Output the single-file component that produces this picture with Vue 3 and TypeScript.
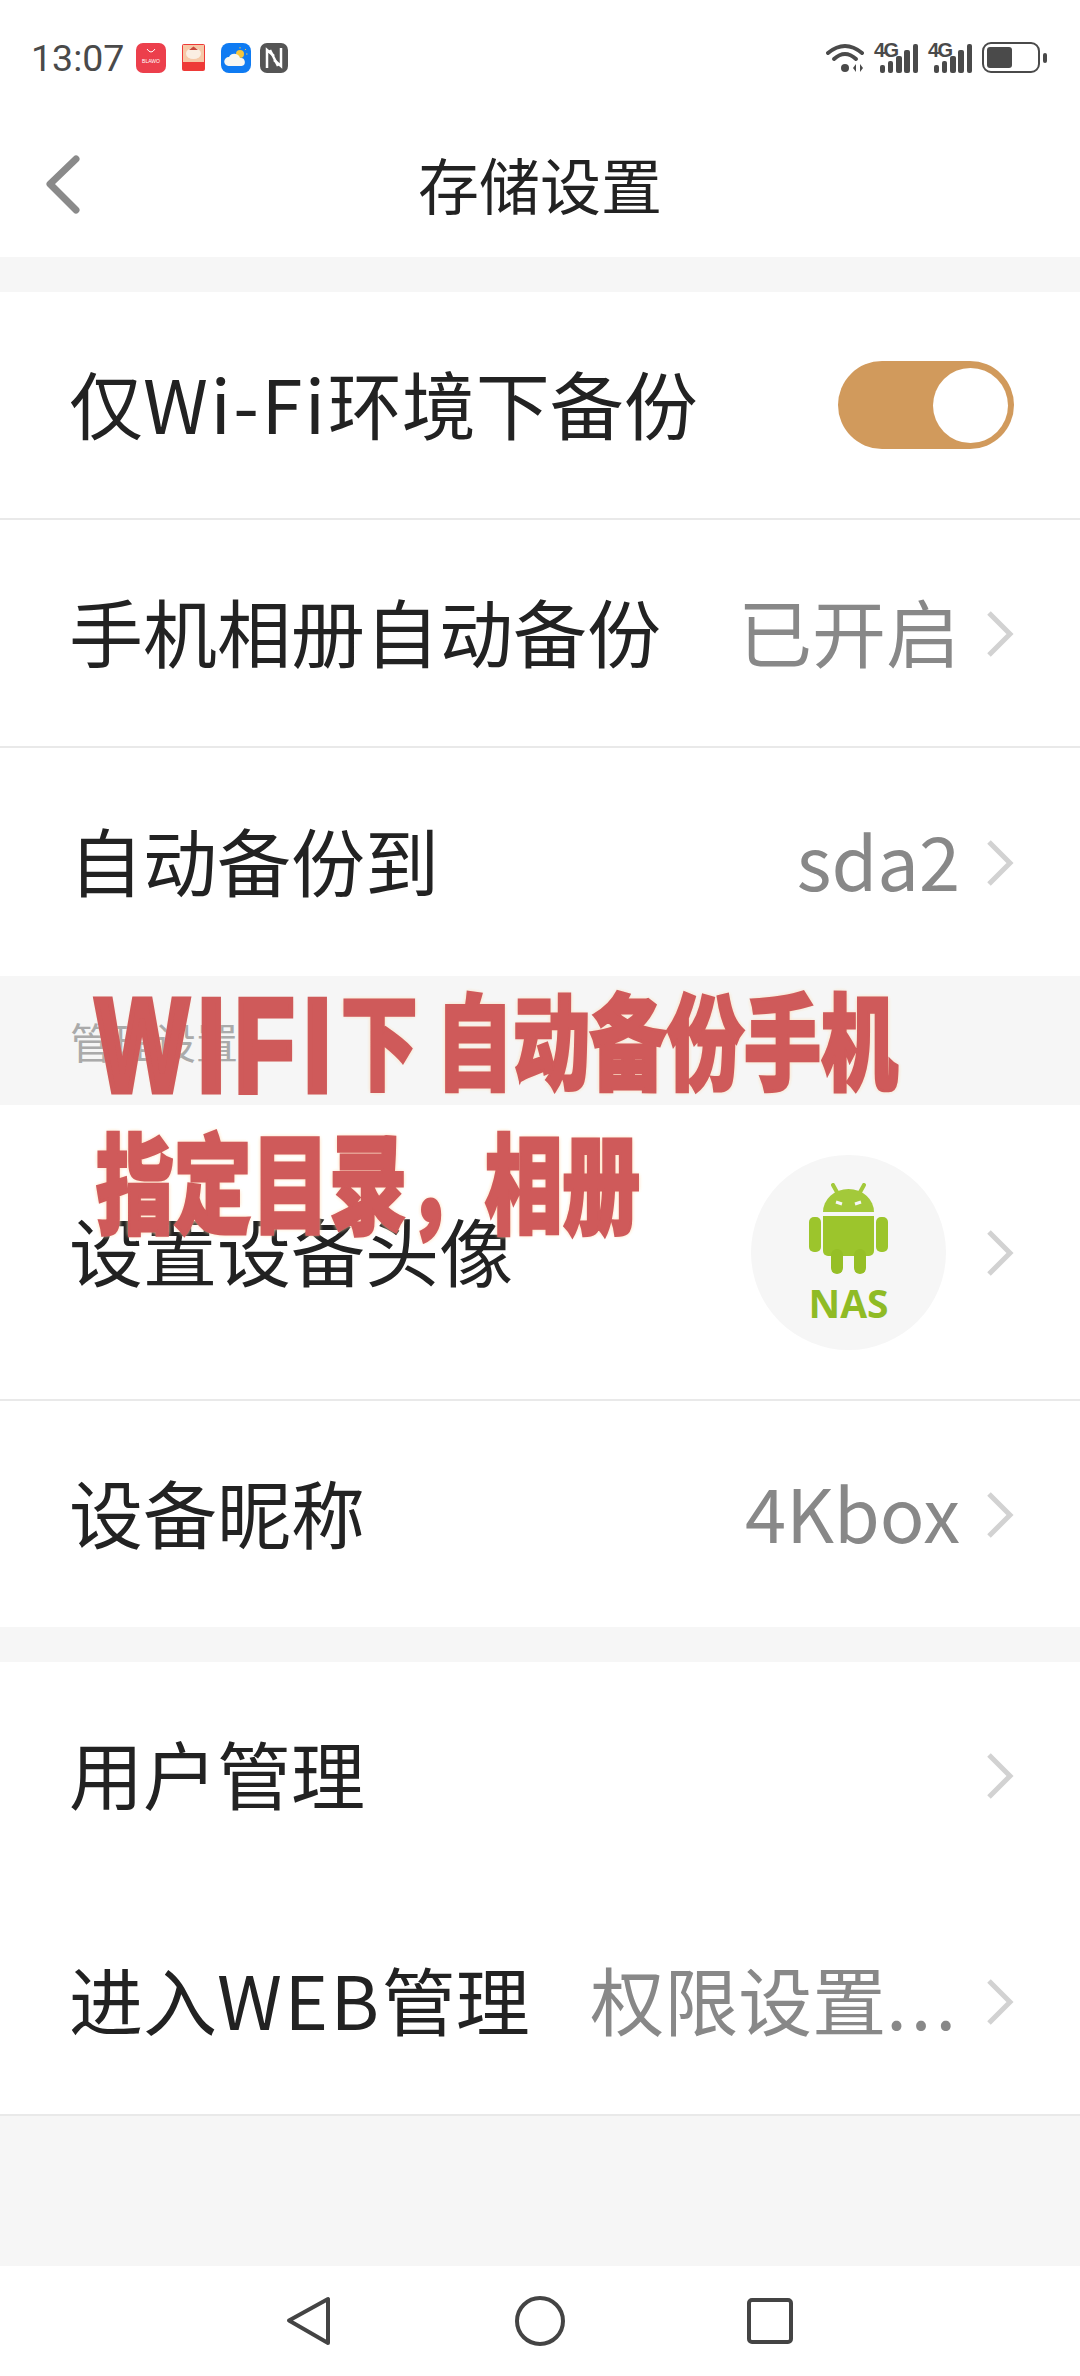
<template>
  <div class="page">
    <div class="status-bar">
      <span class="clock">13:07</span>
      <svg class="ic-shop" viewBox="0 0 30 30">
        <rect width="30" height="30" rx="7" fill="#ec3f4c" />
        <path d="M11 6 Q15 12 19 6" fill="none" stroke="#fff" stroke-width="1" />
        <text x="15" y="19.500" text-anchor="middle" class="tiny">BLAWO</text>
      </svg>
      <svg class="ic-gift" viewBox="0 0 23 27">
        <rect width="23" height="27" rx="2" fill="#ee3a37" />
        <rect x="1" y="1" width="21" height="17" fill="#f6c9a8" />
        <ellipse cx="11.500" cy="9.500" rx="7.500" ry="5.500" fill="#fbeee2" />
        <path d="M7 6 L11.500 2.500 L16 6 Z" fill="#c9483c" />
      </svg>
      <svg class="ic-weather" viewBox="0 0 30 30">
        <rect width="30" height="30" rx="8" fill="#0f7bf2" />
        <circle cx="19" cy="11" r="4" fill="#f5c63c" />
        <path d="M19 4 V5.500 M25 6 L24 7 M26.500 11 H25" stroke="#f5c63c" stroke-width="1" />
        <path d="M7.500 23 a4.500 4.500 0 0 1 0.500 -9 a6 6 0 0 1 11 1 a4 4 0 0 1 1.500 8 Z" fill="#f7f7f2" />
      </svg>
      <svg class="ic-nfc" viewBox="0 0 28 30">
        <rect width="28" height="30" rx="7" fill="#555" />
        <path d="M7 25 V7 L14 13 M21 5 V23 L14 17" fill="none" stroke="#fff" stroke-width="2.500" />
        <path d="M10 7 L18 23" stroke="#fff" stroke-width="2.500" />
      </svg>
      <span class="spacer"></span>
      <svg class="ic-wifi" viewBox="0 0 40 31">
        <path d="M2 11 Q19 -3 36 11" fill="none" stroke="#4a4a4a" stroke-width="4" stroke-linecap="round" />
        <path d="M8 17 Q19 7 30 17" fill="none" stroke="#4a4a4a" stroke-width="4" stroke-linecap="round" />
        <circle cx="19" cy="26" r="4" fill="#4a4a4a" />
        <path d="M30 22 L27 26 L30 30 Z M34 22 L37 26 L34 30 Z" fill="#4a4a4a" />
      </svg>
      <div v-for="n in 2" :key="n" class="signal">
        <span class="four-g">4G</span>
        <span
          v-for="(h, i) in signalBars"
          :key="i"
          class="bar"
          :style="{ height: h + 'px' }"
        ></span>
      </div>
      <div class="battery"><span class="battery-fill"></span></div>
      <span class="battery-nub"></span>
    </div>

    <header class="nav-head">
      <svg class="back" viewBox="0 0 36 60">
        <path d="M31 4 L5 29 L31 55" fill="none" stroke="#8a8a8a" stroke-width="7" stroke-linecap="round" stroke-linejoin="round" />
      </svg>
      <h1 class="title">存储设置</h1>
    </header>

    <div class="gap"></div>
    <section class="group">
      <div class="row line">
        <span class="label">仅<span class="wide">Wi-Fi</span>环境下备份</span>
        <span class="switch"><span class="knob"></span></span>
      </div>
      <div class="row line">
        <span class="label">手机相册自动备份</span>
        <span class="value">已开启</span>
        <svg class="chev" viewBox="0 0 28 48"><path d="M3 3 L24 24 L3 45" /></svg>
      </div>
      <div class="row">
        <span class="label">自动备份到</span>
        <span class="value">sda2</span>
        <svg class="chev" viewBox="0 0 28 48"><path d="M3 3 L24 24 L3 45" /></svg>
      </div>
    </section>

    <div class="section-title">管理设置</div>
    <section class="group">
      <div class="row tall line">
        <span class="label">设置设备头像</span>
        <div class="avatar">
          <svg class="droid" viewBox="0 0 80 92">
            <path d="M14 29 a25.500 23 0 0 1 51 0 Z" fill="#a3c93a" />
            <path d="M24 2 L29 11 M55 2 L50 11" stroke="#a3c93a" stroke-width="4" stroke-linecap="round" />
            <path d="M14 33 H65 V68 a5 5 0 0 1 -5 5 H19 a5 5 0 0 1 -5 -5 Z" fill="#9cc52c" />
            <rect x="0" y="34" width="12" height="35" rx="5" fill="#9cc52c" />
            <rect x="67" y="34" width="12" height="35" rx="5" fill="#9cc52c" />
            <rect x="22" y="66" width="12" height="25" rx="6" fill="#96bf26" />
            <rect x="45" y="66" width="12" height="25" rx="6" fill="#96bf26" />
            <path d="M27 19 L33 21 M52 19 L46 21" stroke="#f6f6f6" stroke-width="3" />
          </svg>
          <span class="nas">NAS</span>
        </div>
        <svg class="chev" viewBox="0 0 28 48"><path d="M3 3 L24 24 L3 45" /></svg>
      </div>
      <div class="row short">
        <span class="label">设备昵称</span>
        <span class="value">4Kbox</span>
        <svg class="chev" viewBox="0 0 28 48"><path d="M3 3 L24 24 L3 45" /></svg>
      </div>
    </section>

    <div class="gap"></div>
    <section class="group line-bottom">
      <div class="row short">
        <span class="label">用户管理</span>
        <svg class="chev" viewBox="0 0 28 48"><path d="M3 3 L24 24 L3 45" /></svg>
      </div>
      <div class="row short">
        <span class="label">进入<span class="wide">WEB</span>管理</span>
        <span class="value">权限设置<span class="dots">...</span></span>
        <svg class="chev" viewBox="0 0 28 48"><path d="M3 3 L24 24 L3 45" /></svg>
      </div>
    </section>

    <div class="filler"></div>
    <footer class="soft-keys">
      <svg class="key" viewBox="0 0 50 50">
        <path d="M43 3 V47 L4 24.500 Z" fill="none" stroke="#444" stroke-width="4" stroke-linejoin="round" />
      </svg>
      <svg class="key" viewBox="0 0 50 50">
        <circle cx="25" cy="25" r="23" fill="none" stroke="#444" stroke-width="4" />
      </svg>
      <svg class="key" viewBox="0 0 50 50">
        <rect x="4" y="4" width="42" height="42" rx="3" fill="none" stroke="#444" stroke-width="4" />
      </svg>
    </footer>

    <div class="overlay overlay-one"><span class="latin">WIFI</span><span class="under">下</span>自动备份手机</div>
    <div class="overlay overlay-two">指定目录，相册</div>
  </div>
</template>

<script setup lang="ts">
const signalBars: number[] = [8, 12, 17, 23, 29]
</script>

<style>
html,
body {
  margin: 0;
  background: #fff;
}
</style>

<style scoped>
.page {
  position: relative;
  display: flex;
  flex-direction: column;
  width: 1080px;
  height: 2376px;
  overflow: hidden;
  background: #f6f6f6;
  font-family: "Noto Sans CJK SC", "Liberation Sans", sans-serif;
}

.status-bar {
  display: flex;
  align-items: center;
  height: 115px;
  padding: 0 33px 0 31px;
  box-sizing: border-box;
  background: #fff;
}

.clock {
  font-family: Roboto, sans-serif;
  font-size: 37.500px;
  color: #4a4a4a;
  margin-right: 12px;
}

.ic-shop {
  width: 30px;
  height: 30px;
  margin-right: 16px;
}

.tiny {
  font-family: "Liberation Sans", sans-serif;
  font-size: 5px;
  fill: #fff;
}

.ic-gift {
  width: 23px;
  height: 27px;
  margin-right: 16px;
}

.ic-weather {
  width: 30px;
  height: 30px;
  margin-right: 9px;
}

.ic-nfc {
  width: 28px;
  height: 30px;
}

.spacer {
  flex: 1;
}

.ic-wifi {
  width: 40px;
  height: 31px;
  margin-right: 8px;
}

.signal {
  position: relative;
  display: flex;
  align-items: flex-end;
  justify-content: flex-end;
  gap: 2.700px;
  width: 44px;
  height: 30px;
  margin-right: 10px;
}

.four-g {
  position: absolute;
  left: 0;
  top: -4px;
  font-family: "Liberation Sans", sans-serif;
  font-weight: 700;
  font-size: 20px;
  letter-spacing: -1.500px;
  color: #4a4a4a;
}

.bar {
  width: 5.500px;
  border-radius: 2px;
  background: #4a4a4a;
}

.battery {
  display: flex;
  align-items: center;
  width: 58px;
  height: 31px;
  padding: 3px;
  box-sizing: border-box;
  border: 2.500px solid #4a4a4a;
  border-radius: 9px;
}

.battery-fill {
  display: block;
  width: 25px;
  height: 100%;
  border-radius: 3px;
  background: #4a4a4a;
}

.battery-nub {
  width: 4px;
  height: 10px;
  margin-left: 3px;
  border-radius: 2px;
  background: #4a4a4a;
}

.nav-head {
  position: relative;
  display: flex;
  align-items: center;
  justify-content: center;
  height: 142px;
  padding-bottom: 6px;
  box-sizing: border-box;
  background: #fff;
}

.back {
  position: absolute;
  left: 45px;
  top: 40px;
  width: 36px;
  height: 60px;
}

.title {
  margin: 0;
  font-size: 61px;
  font-weight: 400;
  color: #222;
  line-height: 1;
}

.gap {
  height: 35px;
}

.group {
  background: #fff;
}

.row {
  display: flex;
  align-items: center;
  height: 228px;
  padding: 0 66px 0 69px;
  box-sizing: border-box;
}

.row.tall {
  height: 296px;
}

.row.short {
  height: 226px;
}

.line {
  border-bottom: 2px solid #e9e9e9;
}

.line-bottom {
  border-bottom: 2px solid #e9e9e9;
}

.label {
  flex: 1;
  padding-bottom: 7px;
  font-size: 74px;
  line-height: 1;
  color: #222;
  white-space: nowrap;
}

.wide {
  letter-spacing: 2.500px;
}

.value {
  padding-bottom: 7px;
  font-size: 74px;
  line-height: 1;
  color: #888;
  white-space: nowrap;
  margin-right: 26px;
}

.dots {
  letter-spacing: 4px;
}

.chev {
  width: 28px;
  height: 48px;
  margin-top: 2px;
  fill: none;
  stroke: #d2d2d2;
  stroke-width: 5px;
}

.switch {
  display: flex;
  justify-content: flex-end;
  align-items: center;
  width: 176px;
  height: 88px;
  padding-right: 6px;
  box-sizing: border-box;
  border-radius: 44px;
  background: #d19a5c;
}

.knob {
  display: block;
  width: 75px;
  height: 75px;
  border-radius: 50%;
  background: #fff;
}

.section-title {
  display: flex;
  align-items: center;
  height: 129px;
  padding-left: 70px;
  font-size: 42px;
  color: #aaa;
}

.avatar {
  display: flex;
  flex-direction: column;
  align-items: center;
  justify-content: center;
  width: 195px;
  height: 195px;
  margin-right: 40px;
  border-radius: 50%;
  background: #f6f6f6;
}

.droid {
  width: 80px;
  height: 92px;
}

.nas {
  font-family: "Open Sans", "Liberation Sans", sans-serif;
  font-size: 39px;
  font-weight: 700;
  line-height: 1;
  margin-top: 8px;
  color: #8fbb25;
}

.filler {
  flex: 1;
}

.soft-keys {
  display: flex;
  align-items: center;
  justify-content: center;
  gap: 180px;
  height: 110px;
  background: #fff;
}

.key {
  width: 50px;
  height: 50px;
}

.overlay {
  position: absolute;
  font-weight: 900;
  color: #cf5a5a;
  white-space: nowrap;
  transform-origin: left top;
  -webkit-text-stroke: 3px #cf5a5a;
  text-shadow: 0 0 5px #ffdcb6, 0 0 5px #ffdcb6;
  line-height: 1;
}

.overlay-one {
  left: 96px;
  top: 985px;
  font-size: 104px;
  transform: scaleX(0.74);
}

.latin {
  font-family: "Liberation Sans", sans-serif;
  font-size: 132px;
  letter-spacing: 13px;
  line-height: 0;
  vertical-align: -9px;
  -webkit-text-stroke: 7px #cf5a5a;
}

.under {
  margin-right: 25px;
}

.overlay-two {
  left: 96px;
  top: 1124px;
  font-size: 108px;
  transform: scaleX(0.72);
}
</style>
